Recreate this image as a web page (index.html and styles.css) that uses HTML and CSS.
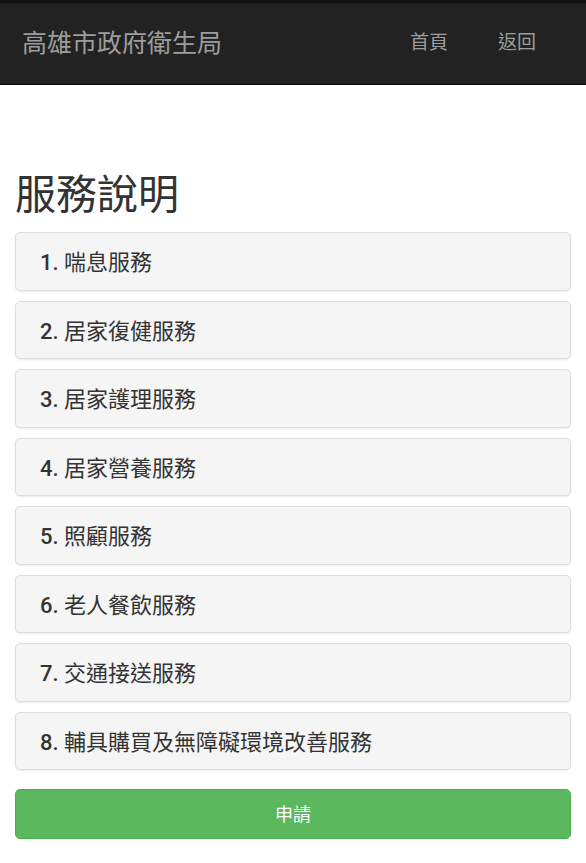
FILE: index.html
```html
<!DOCTYPE html>
<html lang="zh-Hant">
<head>
    <meta charset="UTF-8">
    <meta name="viewport" content="width=device-width, initial-scale=1.0">
    <title>服務說明</title>
    <link rel="stylesheet" href="styles.css">
</head>
<body>
    <div class="statusbar"></div>
    <nav class="navbar">
        <a class="brand" href="#">高雄市政府衛生局</a>
        <ul class="nav-links">
            <li><a href="#">首頁</a></li>
            <li><a href="#">返回</a></li>
        </ul>
    </nav>

    <div class="container">
        <h1 class="page-title">服務說明</h1>
        <ul class="service-list">
            <li class="service-item"><span class="num">1.</span> 喘息服務</li>
            <li class="service-item"><span class="num">2.</span> 居家復健服務</li>
            <li class="service-item"><span class="num">3.</span> 居家護理服務</li>
            <li class="service-item"><span class="num">4.</span> 居家營養服務</li>
            <li class="service-item"><span class="num">5.</span> 照顧服務</li>
            <li class="service-item"><span class="num">6.</span> 老人餐飲服務</li>
            <li class="service-item"><span class="num">7.</span> 交通接送服務</li>
            <li class="service-item"><span class="num">8.</span> 輔具購買及無障礙環境改善服務</li>
        </ul>
        <button class="apply-button">申請</button>
    </div>
</body>
</html>
```

FILE: styles.css
```css
body {
    margin: 0;
    background-color: #ffffff;
    font-family: "Noto Sans CJK TC", "Noto Sans", sans-serif;
    color: #333;
}

.statusbar {
    height: 3px;
    background-color: #111;
}

.navbar {
    display: flex;
    align-items: center;
    justify-content: space-between;
    height: 82px;
    box-sizing: border-box;
    padding: 0 22px 6px 22px;
    background-color: #222;
    border-bottom: 1px solid #080808;
}

.brand {
    color: #9d9d9d;
    font-size: 25px;
    text-decoration: none;
}

.nav-links {
    display: flex;
    list-style: none;
    margin: 0 28px 0 0;
    padding: 0;
    gap: 50px;
}

.nav-links a {
    color: #9d9d9d;
    font-size: 19px;
    text-decoration: none;
}

.container {
    padding: 0 15px 0 15px;
}

.page-title {
    font-size: 41px;
    font-weight: 400;
    margin: 81px 0 16px 0;
    line-height: 50px;
    color: #333;
}

.service-list {
    list-style: none;
    margin: 0;
    padding: 0;
    display: flex;
    flex-direction: column;
    gap: 10px;
}

.service-item {
    height: 58.5px;
    box-sizing: border-box;
    line-height: 52px;
    padding: 4px 13px 0 24px;
    background-color: #f5f5f5;
    border: 1px solid #ddd;
    border-radius: 5px;
    box-shadow: 0 1px 2px rgba(0, 0, 0, 0.08);
    font-family: Roboto, "Noto Sans CJK TC", sans-serif;
    font-size: 22px;
    color: #333;
}

.num {
    font-weight: 500;
}

.apply-button {
    display: block;
    width: 100%;
    height: 50px;
    margin-top: 19px;
    padding: 0 0 2px 0;
    background-color: #5cb85c;
    border: 1px solid #4cae4c;
    border-radius: 5px;
    color: #fff;
    font-family: inherit;
    font-size: 18px;
}
```
